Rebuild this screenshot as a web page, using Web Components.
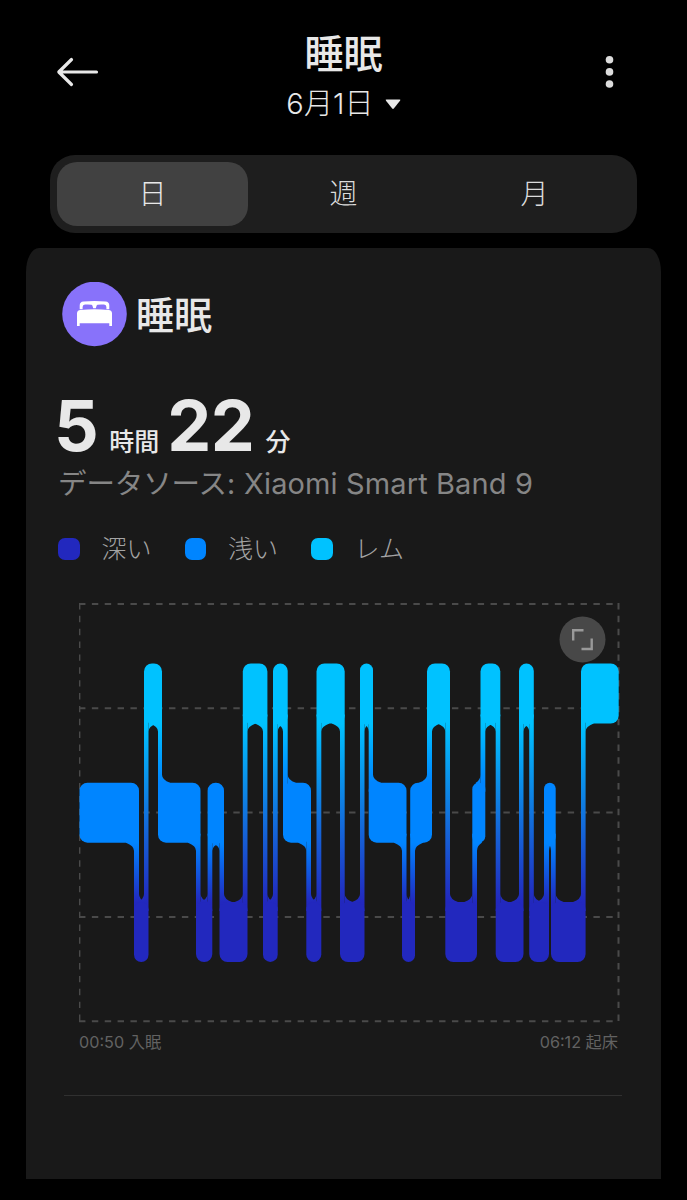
<!DOCTYPE html>
<html lang="ja">
<head>
<meta charset="utf-8">
<title>睡眠</title>
<style>
  html, body {
    margin: 0;
    background: #000;
  }
  body {
    width: 687px;
    height: 1200px;
    overflow: hidden;
    font-family: Inter, "Noto Sans CJK JP", sans-serif;
    color: #e8e8e8;
  }
</style>
</head>
<body>
<sleep-page>
  <page-header slot="header" date="6月1日">睡眠</page-header>
  <segmented-tabs slot="tabs">
    <tab-item active>日</tab-item>
    <tab-item>週</tab-item>
    <tab-item>月</tab-item>
  </segmented-tabs>
  <sleep-card>
    <span slot="title">睡眠</span>
    <sleep-duration hours="5" minutes="22"></sleep-duration>
    <data-source label="データソース:">Xiaomi Smart Band 9</data-source>
    <chart-legend>
      <legend-item color="#2228be">深い</legend-item>
      <legend-item color="#0085ff">浅い</legend-item>
      <legend-item color="#00c2ff">レム</legend-item>
    </chart-legend>
    <sleep-chart start="00:50 入眠" end="06:12 起床"></sleep-chart>
  </sleep-card>
</sleep-page>

<script>
class SleepPage extends HTMLElement {
  constructor() {
    super();
    this.attachShadow({ mode: "open" });
    this.shadowRoot.innerHTML = `
      <style>
        :host {
          display: flex;
          flex-direction: column;
          box-sizing: border-box;
          height: 1200px;
          padding: 0 26px;
        }
      </style>
      <slot name="header"></slot>
      <slot name="tabs"></slot>
      <slot></slot>
    `;
  }
}

class PageHeader extends HTMLElement {
  constructor() {
    super();
    this.attachShadow({ mode: "open" });
  }

  connectedCallback() {
    this.shadowRoot.innerHTML = `
      <style>
        :host {
          display: grid;
          grid-template-columns: 44px 1fr 44px;
          box-sizing: border-box;
          height: 155px;
          padding: 31px 28px 0;
        }
        svg { display: block; }
        .back, .more { margin-top: 25px; }
        .center {
          display: flex;
          flex-direction: column;
          align-items: center;
        }
        .title {
          height: 48px;
          line-height: 46px;
          font-size: 39px;
          font-weight: 500;
        }
        .date {
          display: flex;
          align-items: center;
          gap: 11px;
          height: 50px;
          line-height: 50px;
          font-size: 29px;
          font-weight: 300;
          letter-spacing: .1px;
        }
      </style>
      <svg class="back" width="46" height="32" viewBox="0 0 46 32" fill="none" stroke="#e8e8e8" stroke-width="3.2" stroke-linecap="round" stroke-linejoin="round">
        <path d="M42.500 16H5M17.500 3.500L4.800 16L17.500 28.500"/>
      </svg>
      <div class="center">
        <div class="title"><slot></slot></div>
        <div class="date">
          <span>${this.getAttribute("date")}</span>
          <svg width="16" height="11" viewBox="0 0 16 11">
            <path d="M1.500 .4H14.500Q16 .4 15 1.800L9 9.300Q8 10.500 7 9.300L1 1.800Q0 .4 1.500 .4Z" fill="#e8e8e8"/>
          </svg>
        </div>
      </div>
      <svg class="more" width="44" height="32" viewBox="0 0 44 32" fill="#dcdcdc">
        <circle cx="20.500" cy="3.800" r="3.800"/>
        <circle cx="20.500" cy="15.900" r="3.800"/>
        <circle cx="20.500" cy="28" r="3.800"/>
      </svg>
    `;
  }
}

class SegmentedTabs extends HTMLElement {
  constructor() {
    super();
    this.attachShadow({ mode: "open" });
    this.shadowRoot.innerHTML = `
      <style>
        :host {
          display: grid;
          grid-template-columns: repeat(3, 1fr);
          box-sizing: border-box;
          height: 78px;
          margin: 0 24px 15px;
          padding: 7px;
          border-radius: 25px;
          background: #1e1e1e;
        }
      </style>
      <slot></slot>
    `;
  }
}

class TabItem extends HTMLElement {
  constructor() {
    super();
    this.attachShadow({ mode: "open" });
    this.shadowRoot.innerHTML = `
      <style>
        :host {
          display: flex;
          align-items: center;
          justify-content: center;
          border-radius: 20px;
          font-size: 28px;
          font-weight: 300;
          line-height: 1;
          color: #dcdcdc;
        }
        :host([active]) {
          background: #414141;
          color: #e8e8e8;
        }
      </style>
      <slot></slot>
    `;
  }
}

class SleepCard extends HTMLElement {
  constructor() {
    super();
    this.attachShadow({ mode: "open" });
    this.shadowRoot.innerHTML = `
      <style>
        :host {
          display: block;
          box-sizing: border-box;
          height: 931px;
          padding: 34px 32px 0;
          border-radius: 13px 13px 0 0 / 24px 24px 0 0;
          background: #191919;
        }
        .head {
          display: flex;
          align-items: center;
          gap: 9px;
          height: 65px;
          padding-left: 4px;
          font-size: 38px;
          font-weight: 500;
        }
        ::slotted([slot="title"]) {
          margin-bottom: 4px;
        }
        .divider {
          height: 1px;
          margin: 38px 7px 0 6px;
          background: #303030;
        }
      </style>
      <div class="head">
        <svg width="65" height="65" viewBox="0 0 65 65">
          <circle cx="32.500" cy="32" r="32.300" fill="#8872fa"/>
          <path fill="#fff" d="M17.700 27.300V23.500Q17.700 19.800 21.500 19.500Q32.500 18.600 43.500 19.500Q47.300 19.800 47.300 23.500V27.300H44.400V25Q44.400 22.800 42 22.600Q38.500 22.200 35.500 22.800Q34.600 23.100 34.400 24.300L33.800 26.300H31.200L30.600 24.300Q30.400 23.100 29.500 22.800Q26.500 22.200 23 22.600Q20.600 22.800 20.600 25V27.300Z"/>
          <path fill="#fff" d="M15 44V31.500Q15 28.400 18.500 28Q32.500 26.400 46.500 28Q50 28.400 50 31.500V44H47.300V41.200H17.700V44Z"/>
        </svg>
        <slot name="title"></slot>
      </div>
      <slot></slot>
      <div class="divider"></div>
    `;
  }
}

class SleepDuration extends HTMLElement {
  constructor() {
    super();
    this.attachShadow({ mode: "open" });
  }

  connectedCallback() {
    this.shadowRoot.innerHTML = `
      <style>
        :host {
          display: flex;
          align-items: baseline;
          height: 80px;
          margin: 38px 0 0 -4px;
          line-height: 82px;
        }
        .num {
          font-size: 70px;
          font-weight: 700;
          letter-spacing: -.5px;
        }
        .unit {
          margin: 0 8px 0 11px;
          font-size: 25px;
          font-weight: 500;
        }
      </style>
      <span class="num">${this.getAttribute("hours")}</span>
      <span class="unit">時間</span>
      <span class="num">${this.getAttribute("minutes")}</span>
      <span class="unit">分</span>
    `;
  }
}

class DataSource extends HTMLElement {
  constructor() {
    super();
    this.attachShadow({ mode: "open" });
  }

  connectedCallback() {
    this.shadowRoot.innerHTML = `
      <style>
        :host {
          display: flex;
          align-items: baseline;
          gap: 9px;
          height: 37px;
          line-height: 38px;
          white-space: nowrap;
          font-size: 29px;
          letter-spacing: .12px;
          color: #868686;
        }
        .label {
          font-size: 28.500px;
          letter-spacing: -.1px;
        }
      </style>
      <span class="label">${this.getAttribute("label")}</span>
      <span><slot></slot></span>
    `;
  }
}

class ChartLegend extends HTMLElement {
  constructor() {
    super();
    this.attachShadow({ mode: "open" });
    this.shadowRoot.innerHTML = `
      <style>
        :host {
          display: flex;
          height: 36px;
          margin-top: 29px;
        }
      </style>
      <slot></slot>
    `;
  }
}

class LegendItem extends HTMLElement {
  constructor() {
    super();
    this.attachShadow({ mode: "open" });
  }

  connectedCallback() {
    this.shadowRoot.innerHTML = `
      <style>
        :host {
          display: flex;
          align-items: center;
          gap: 22px;
          width: 126.500px;
          font-size: 25px;
          font-weight: 300;
          line-height: 36px;
          color: #a4a4a4;
        }
        i {
          width: 21.500px;
          height: 21.500px;
          border-radius: 7px;
          background: ${this.getAttribute("color")};
        }
      </style>
      <i></i>
      <slot></slot>
    `;
  }
}

// [from, to, stage], in chart pixels
const STAGES = [
  [0.5, 60, "light"], [55, 69.5, "deep"], [65, 83, "rem"], [79, 121.5, "light"],
  [117, 133.3, "deep"], [128.6, 145, "light"], [140.5, 168.5, "deep"], [163.8, 188.4, "rem"],
  [184, 198.7, "deep"], [194, 208.7, "rem"], [204, 232, "light"], [227.3, 242.3, "deep"],
  [237.5, 265.7, "rem"], [261, 285.5, "deep"], [281, 294, "rem"], [289.7, 327.5, "light"],
  [323, 336, "deep"], [331.2, 353, "light"], [348, 371, "rem"], [366.3, 398, "deep"],
  [393.3, 406.3, "light"], [401.5, 421.3, "rem"], [416.7, 444.5, "deep"], [440, 454.8, "rem"],
  [450.2, 470, "deep"], [465, 476.7, "light"], [472, 506.6, "deep"], [502, 539.7, "rem"]
];
const COLORS = { rem: "#00c2ff", light: "#0085ff", deep: "#2228be" };
const TOPS = { rem: 60.5, light: 179.7, deep: 299 };
const BAR = 60;
const RADIUS = 8;

class SleepChart extends HTMLElement {
  constructor() {
    super();
    this.attachShadow({ mode: "open" });
  }

  connectedCallback() {
    this.shadowRoot.innerHTML = `
      <style>
        :host {
          display: block;
          margin-left: 21px;
        }
        .plot {
          position: relative;
          width: 542px;
          height: 420px;
          margin-top: 36px;
        }
        .expand {
          position: absolute;
          top: 13px;
          left: 480px;
        }
        svg { display: block; }
        .times {
          display: flex;
          justify-content: space-between;
          width: 539px;
          height: 30px;
          margin-top: 4px;
          line-height: 30px;
          font-size: 16.200px;
          color: #626262;
        }
      </style>
      <div class="plot">
        <svg width="542" height="420" viewBox="0 0 542 420">
          <defs>
            ${this.gradient("rem", "light")}
            ${this.gradient("light", "deep")}
            ${this.gradient("rem", "deep")}
          </defs>
          <g stroke="#4a4a4a" stroke-width="2" stroke-dasharray="6.430 6.430">
            ${[1, 105.3, 209.6, 314, 418.3].map((y) => `<path d="M0 ${y}H540"/>`).join("")}
            <path stroke-width="1.400" d="M.7 0V419"/>
            <path d="M539.500 0V419"/>
          </g>
          ${this.joints()}
          ${this.bars()}
        </svg>
        <svg class="expand" width="47" height="47" viewBox="0 0 47 47">
          <circle cx="23.500" cy="23.500" r="23" fill="#484848"/>
          <path d="M14.200 24.500V14.300H24.500M22.500 33H32.700V22.500" fill="none" stroke="#999" stroke-width="2.400"/>
        </svg>
      </div>
      <div class="times">
        <span>${this.getAttribute("start")}</span>
        <span>${this.getAttribute("end")}</span>
      </div>
    `;
  }

  gradient(upper, lower) {
    return `
      <linearGradient id="${upper}-${lower}" gradientUnits="userSpaceOnUse" x1="0" x2="0" y1="${TOPS[upper] + BAR}" y2="${TOPS[lower]}">
        <stop offset="0" stop-color="${COLORS[upper]}"/>
        <stop offset="1" stop-color="${COLORS[lower]}"/>
      </linearGradient>`;
  }

  bars() {
    return STAGES.map(([x0, x1, stage]) => {
      const r = Math.min(RADIUS, (x1 - x0) / 2);
      return `<rect x="${x0}" y="${TOPS[stage]}" width="${x1 - x0}" height="${BAR}" rx="${r}" fill="${COLORS[stage]}"/>`;
    }).join("");
  }

  // Thin link between two neighbouring stages, with a fillet where it leaves each bar.
  joints() {
    return STAGES.slice(1).map(([left, end, stage], i) => {
      const [start, right, prev] = STAGES[i];
      const down = TOPS[stage] > TOPS[prev];
      const upper = down ? prev : stage;
      const lower = down ? stage : prev;
      const top = TOPS[upper] + BAR;
      const bottom = TOPS[lower];
      const fill = `url(#${upper}-${lower})`;
      const r = RADIUS;
      // a fillet must end inside its bar, short of the far corner
      const before = Math.min(r, left - start - 3.5);
      const after = Math.min(r, end - right - 3.5);
      // the upper bar lies left of a falling link and right of a rising one
      const xu = down ? left : right;
      const xl = down ? right : left;
      const wu = down ? -before : after;
      const wl = down ? after : -before;
      return `
        <rect x="${left}" y="${top - 9}" width="${right - left}" height="${bottom - top + 18}" fill="${fill}"/>
        <path fill="${fill}" d="M${xu} ${top + r}Q${xu} ${top + 3} ${xu + wu} ${top}V${top - 2}H${xu}Z"/>
        <path fill="${fill}" d="M${xl} ${bottom - r}Q${xl} ${bottom - 3} ${xl + wl} ${bottom}V${bottom + 2}H${xl}Z"/>`;
    }).join("");
  }
}

customElements.define("sleep-page", SleepPage);
customElements.define("page-header", PageHeader);
customElements.define("segmented-tabs", SegmentedTabs);
customElements.define("tab-item", TabItem);
customElements.define("sleep-card", SleepCard);
customElements.define("sleep-duration", SleepDuration);
customElements.define("data-source", DataSource);
customElements.define("chart-legend", ChartLegend);
customElements.define("legend-item", LegendItem);
customElements.define("sleep-chart", SleepChart);
</script>
</body>
</html>
